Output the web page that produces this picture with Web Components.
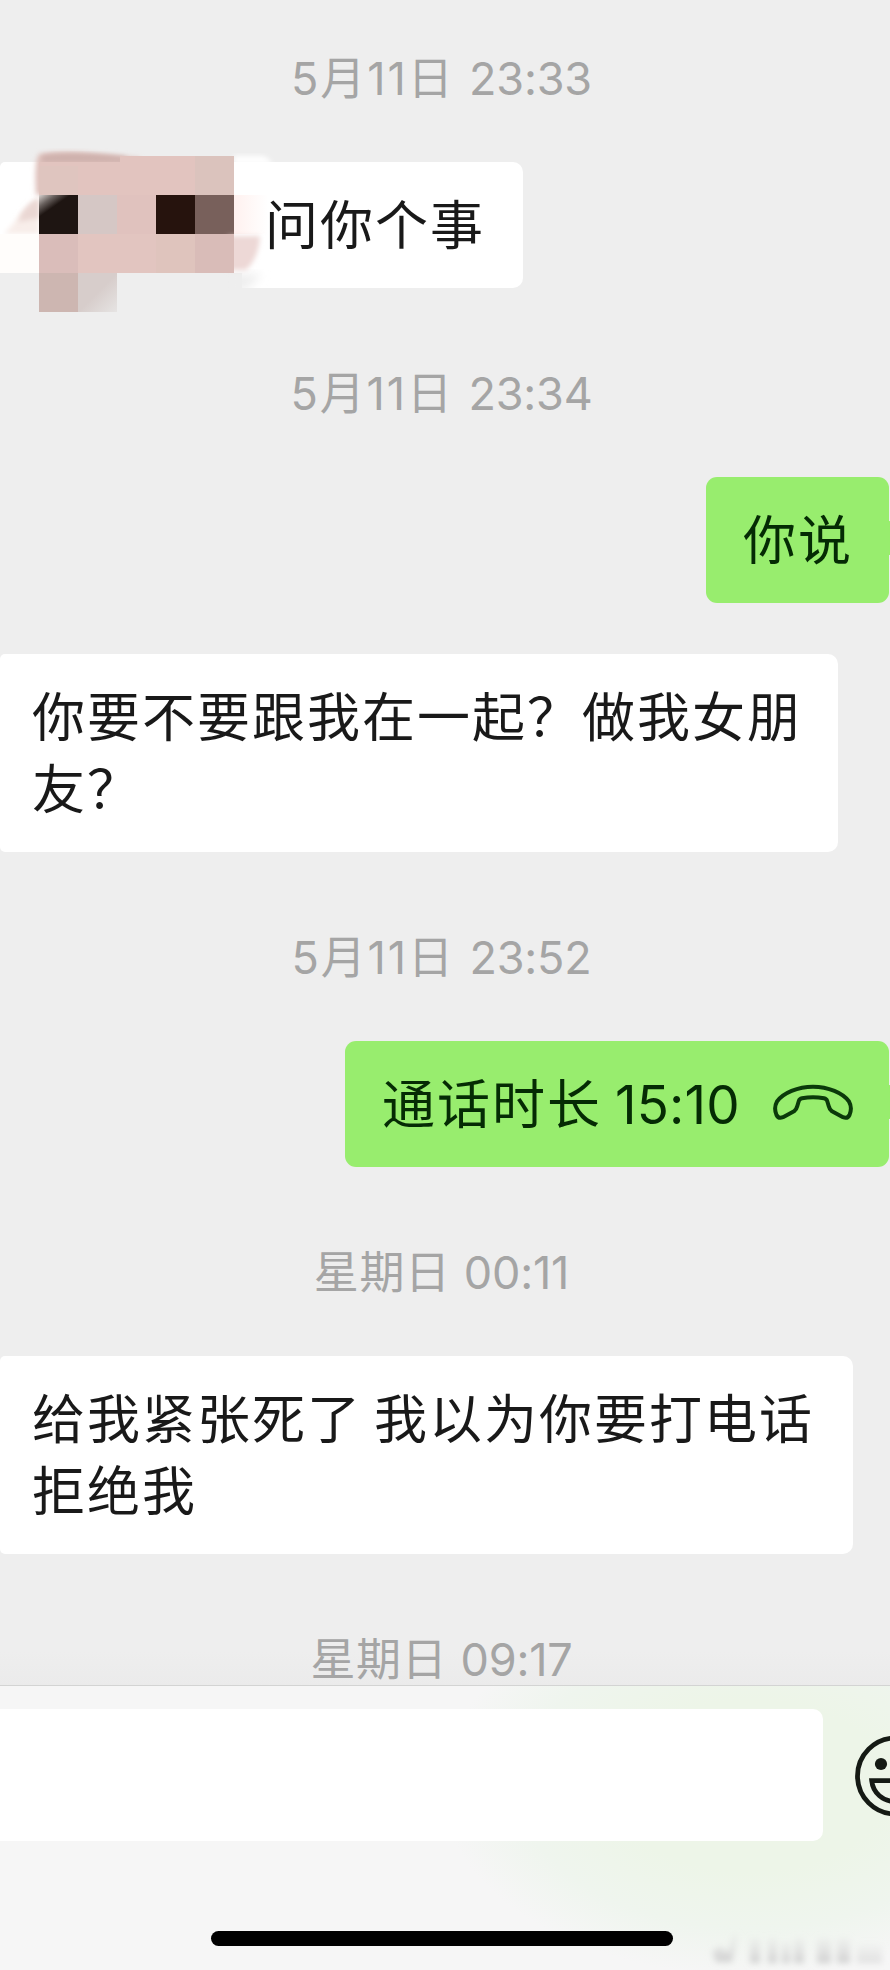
<!DOCTYPE html>
<html lang="zh-CN">
<head>
<meta charset="utf-8">
<title>聊天</title>
<style>
html,body{margin:0;padding:0;background:#eee}
body{width:890px;height:1970px;overflow:hidden;font-family:Inter,"Noto Sans CJK SC",sans-serif}
</style>
</head>
<body>
<chat-screen>
  <chat-time class="first" style="--ls:1.9px">5月11日 <chat-num>23:33</chat-num></chat-time>
  <chat-bubble style="--w:523px;--pl:265px"><mosaic-cover slot="cover"></mosaic-cover>问你个事</chat-bubble>
  <chat-time style="--ls:1.9px">5月11日 <chat-num>23:34</chat-num></chat-time>
  <chat-bubble mine style="--w:183px">你说</chat-bubble>
  <chat-bubble class="reply" style="--w:838px">你要不要跟我在一起？做我女朋<br>友？</chat-bubble>
  <chat-time style="--ls:1.9px">5月11日 <chat-num>23:52</chat-num></chat-time>
  <chat-bubble mine style="--w:544px;--ws:-4px">通话时长 <chat-num style="--nl:.2px;--nm:0px">15:10</chat-num><phone-icon slot="icon"></phone-icon></chat-bubble>
  <chat-time>星期日 <chat-num>00:11</chat-num></chat-time>
  <chat-bubble style="--w:853px">给我紧张死了 我以为你要打电话<br>拒绝我</chat-bubble>
  <chat-time>星期日 <chat-num>09:17</chat-num></chat-time>
  <chat-footer slot="footer"></chat-footer>
</chat-screen>
<script>
function define(name, html) {
  const t = document.createElement('template');
  t.innerHTML = html;
  customElements.define(name, class extends HTMLElement {
    constructor() {
      super();
      this.attachShadow({mode: 'open'}).appendChild(t.content.cloneNode(true));
    }
  });
}

define('chat-screen', `<style>
:host{display:flex;flex-direction:column;width:890px;height:1970px;background:#eee;overflow:hidden}
main{display:flex;flex-direction:column;height:1685px;overflow:hidden;box-sizing:border-box;flex:none;
 background:linear-gradient(#eee 98%,#ebebeb)}
::slotted(.first){margin-top:49px!important}
::slotted(.reply){margin-top:51px!important}
</style><main><slot></slot></main><slot name="footer"></slot>`);

define('chat-time', `<style>
:host{display:block;height:60px;line-height:60px;margin:76px 7px 53px 0;text-align:center;flex:none;
 font-size:45px;color:#a5a5a5;letter-spacing:var(--ls,.6px);white-space:pre}
</style><slot></slot>`);

define('chat-num', `<style>:host{display:inline;letter-spacing:var(--nl,-.2px);margin-left:var(--nm,0px)}</style><slot></slot>`);

define('chat-bubble', `<style>
:host{display:flex;position:relative;box-sizing:border-box;width:var(--w);padding:28px 0 26px var(--pl,32px);
 background:#fff;border-radius:5px 10px 10px 5px;font-size:53px;line-height:72px;letter-spacing:2px;color:#191919;
 word-spacing:var(--ws,-5px);flex:none;white-space:pre}
:host([mine]){align-self:flex-end;margin-right:1px;background:#98ed6e;border-radius:11px;padding-left:37px;color:#052b04}
:host([mine])::after{content:"";position:absolute;right:-2px;top:44px;width:3px;height:34px;background:#98ed6e;border-radius:2px}
</style><div><slot></slot></div><slot name="icon"></slot><slot name="cover"></slot>`);

define('phone-icon', `<style>:host{display:block;position:absolute;left:428px;top:43px;white-space:normal}svg{display:block}</style>
<svg width="80" height="36" viewBox="0 0 80 36" fill="none" stroke="#0b3a0a" stroke-width="4" stroke-linejoin="round">
<path d="M40 2.7C25 2.7 10 9 4 17.5C1.5 22 1.8 27 3.5 31Q5.5 35 10 33.2L21 27.3Q23.5 25.5 24.3 22L25.8 17Q26.5 14.8 29 14.3Q40 12 51 14.3Q53.5 14.8 54.2 17L55.7 22Q56.5 25.5 59 27.3L70 33.2Q74.5 35 76.5 31C78.2 27 78.5 22 76 17.5C70 9 55 2.7 40 2.7Z"/></svg>`);

define('mosaic-cover', `<style>:host{display:block;position:absolute;left:0;top:-14px;white-space:normal}svg{display:block}</style>
<svg width="285" height="168" viewBox="0 148 285 168">
<defs>
<filter id="b" x="-30%" y="-30%" width="160%" height="160%"><feGaussianBlur stdDeviation="5"/></filter>
<filter id="c" x="-30%" y="-30%" width="160%" height="160%"><feGaussianBlur stdDeviation="2.5"/></filter>
<linearGradient id="g"><stop offset="0" stop-color="#fff1ef"/><stop offset="1" stop-color="#fff"/></linearGradient>
<linearGradient id="h" x1="0" y1="0" x2=".7" y2="1"><stop offset="0" stop-color="#d8d2cf"/><stop offset=".2" stop-color="#6a625f"/><stop offset=".38" stop-color="#1e1512"/></linearGradient>
<linearGradient id="e" x1="0" y1="0" x2="1" y2="1"><stop offset=".5" stop-color="#d7cdcb"/><stop offset="1" stop-color="#e6e4e3"/></linearGradient>
</defs>
<rect x="-10" y="273" width="252" height="18" fill="#eee"/>
<path d="M232 274H262L246 290H232Z" fill="#eee" filter="url(#b)"/>
<path d="M234 156H262Q270 158 272 164H234Z" fill="#fff" filter="url(#c)"/>
<rect y="234" width="39" height="39" fill="#fffdfb"/>
<path d="M39 154Q60 150 90 153L140 158V195H36Q34 160 39 154Z" fill="#dfc1bc" filter="url(#c)"/>
<path d="M42 156Q70 151 126 157V162H42Z" fill="#cdb0ac" filter="url(#c)"/>
<path d="M39 162H195V234H39Z" fill="#e2c4bf"/>
<path d="M120 156H195V200H120Z" fill="#e2c4bf"/>
<rect x="39" y="166" width="39" height="29" fill="#dfc5bf"/>
<rect x="195" y="156" width="39" height="39" fill="#dbc3bd"/>
<path d="M39 198L22 212Q12 226 4 234H39Z" fill="#f8eeea" filter="url(#c)"/>
<path d="M39 198Q24 204 18 222L39 218Z" fill="#ead7d3" filter="url(#c)"/>
<rect y="234" width="39" height="39" fill="#fffdfb"/>
<rect x="39" y="195" width="39" height="39" fill="url(#h)"/>
<rect x="78" y="195" width="39" height="39" fill="#d5c7c5"/>
<rect x="117" y="195" width="39" height="39" fill="#e0c2be"/>
<rect x="156" y="195" width="39" height="39" fill="#26130d"/>
<rect x="195" y="195" width="39" height="39" fill="#78605b"/>
<rect x="234" y="195" width="34" height="39" fill="url(#g)"/>
<rect x="39" y="234" width="39" height="39" fill="#dabdba"/>
<rect x="78" y="234" width="78" height="39" fill="#e2c5c0"/>
<rect x="156" y="234" width="39" height="39" fill="#dfc4bd"/>
<path d="M228 236H260Q259 258 246 270H228Z" fill="#edd8d6" filter="url(#c)"/>
<rect x="195" y="234" width="39" height="39" fill="#d9bcb8"/>
<rect x="39" y="273" width="39" height="39" fill="#cdb6b1"/>
<rect x="78" y="273" width="39" height="39" fill="url(#e)"/>
</svg>`);

define('chat-footer', `<style>
:host{display:flex;flex-direction:column;height:285px;box-sizing:border-box;border-top:1px solid #d3d4d3;position:relative;flex:none;
 background:radial-gradient(ellipse 310px 190px at 750px 100px,#edf5e8 0 45%,#eff5ee 75%,#f6f6f600),#f6f6f6}
.row{display:flex;align-items:center;margin-top:23px;height:132px}
.input{width:823px;height:132px;background:#fff;border-radius:0 10px 10px 0;flex:none}
.face{margin-left:30px;flex:none;display:block}
.home{width:462px;height:15px;border-radius:8px;background:#000;margin:90px 0 0 211px}
.mark{position:absolute;left:700px;top:242px}
</style>
<div class="row"><div class="input"></div>
<svg class="face" width="85" height="85" viewBox="0 0 85 85"><circle cx="42.5" cy="43" r="38" fill="none" stroke="#151a14" stroke-width="4.8"/>
<circle cx="28" cy="31" r="6.1" fill="#151a14"/><circle cx="57" cy="31" r="6.1" fill="#151a14"/>
<path d="M18.7 47.7H66.3C65 60 55 68.5 42.5 68.5S20 60 18.7 47.7Z" fill="none" stroke="#151a14" stroke-width="4.8"/></svg></div>
<div class="home"></div>
<svg class="mark" width="190" height="43" viewBox="0 0 190 43"><defs><filter id="m" x="-10%" y="-30%" width="120%" height="160%"><feGaussianBlur stdDeviation="3"/></filter>
<linearGradient id="v" x1="0" y1="0" x2="0" y2="1"><stop offset="0" stop-color="#ddd" stop-opacity=".2"/><stop offset="1" stop-color="#cfcfcf"/></linearGradient></defs>
<g filter="url(#m)" fill="url(#v)"><path d="M12 24L20 18 28 25 33 6H38L32 34H16Z"/><rect x="50" y="10" width="10" height="25"/><rect x="68" y="10" width="9" height="25"/><rect x="82" y="14" width="8" height="21"/><rect x="94" y="10" width="10" height="25"/><rect x="117" y="10" width="14" height="25"/><rect x="137" y="10" width="13" height="25"/><rect x="157" y="16" width="25" height="19" opacity=".6"/></g></svg>`);
</script>
</body>
</html>
